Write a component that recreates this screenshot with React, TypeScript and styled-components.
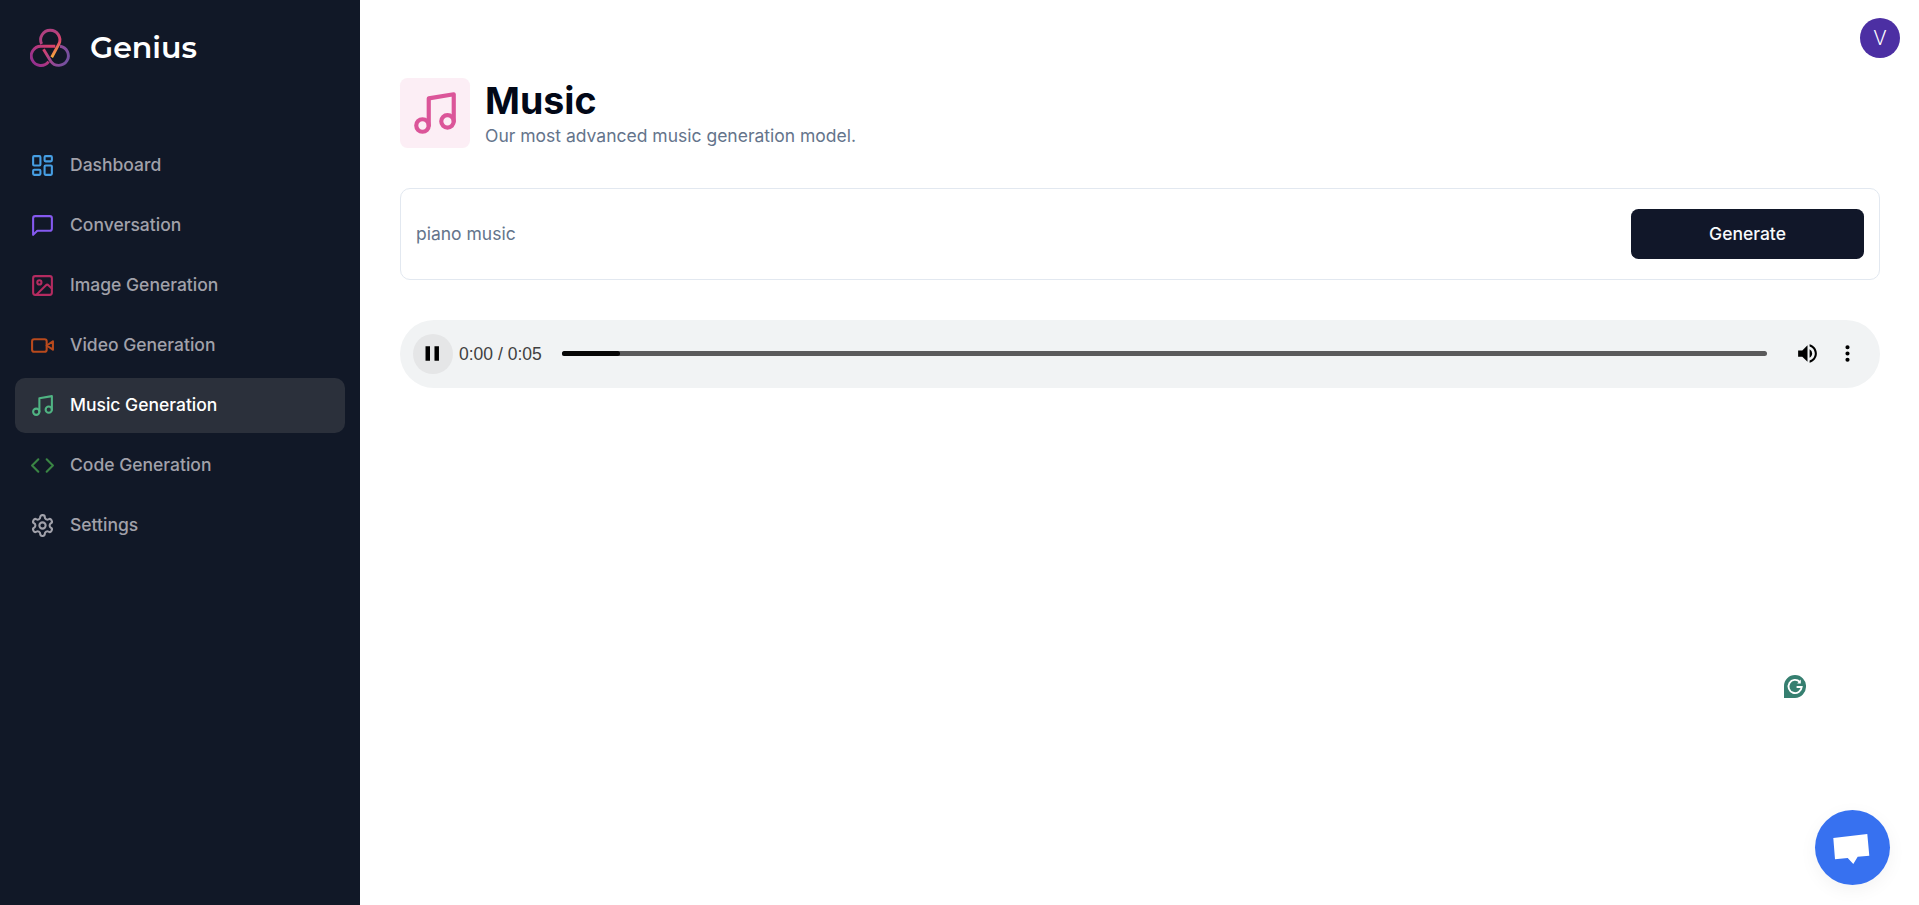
import React from "react";
import styled, { createGlobalStyle } from "styled-components";

const GlobalStyle = createGlobalStyle`
  *, *::before, *::after { box-sizing: border-box; }
  html { font-size: 20px; }
  body {
    margin: 0;
    background: #fff;
    color: #020817;
    font-family: Inter, "Liberation Sans", sans-serif;
    line-height: 1.5;
  }
  h1, h2, p { margin: 0; }
  button, input { font: inherit; }
`;

const Page = styled.div`
  display: flex;
  height: 100vh;
  overflow: hidden;
`;

const Sidebar = styled.aside`
  width: 18rem;
  flex: none;
  padding: 1rem 0.75rem;
  background: #111827;
  color: #fff;
`;

const Brand = styled.a`
  display: flex;
  align-items: center;
  gap: 1rem;
  height: 2rem;
  margin: 0.4rem 0 3.5rem;
  padding-left: 0.75rem;
`;

const BrandMark = styled.svg`
  width: 2rem;
  height: 2rem;
  fill: none;
  stroke-width: 2.9;
`;

const BrandName = styled.h1`
  font-family: Montserrat, Inter, sans-serif;
  font-size: 1.5rem;
  font-weight: 600;
  line-height: 2rem;
`;

const Nav = styled.nav`
  display: flex;
  flex-direction: column;
  gap: 0.25rem;
`;

const NavItem = styled.a<{ $active?: boolean }>`
  display: flex;
  align-items: center;
  gap: 0.75rem;
  height: 2.75rem;
  padding: 0.75rem;
  border-radius: 0.5rem;
  font-size: 0.875rem;
  font-weight: 500;
  color: ${(p) => (p.$active ? "#fff" : "#a1a1aa")};
  background: ${(p) => (p.$active ? "#2b303b" : "transparent")};
`;

const LineIcon = styled.svg<{ $size: string; $color: string }>`
  width: ${(p) => p.$size};
  height: ${(p) => p.$size};
  flex: none;
  fill: none;
  stroke: ${(p) => p.$color};
  stroke-width: 2;
  stroke-linecap: round;
  stroke-linejoin: round;
`;

const Main = styled.main`
  flex: 1;
  min-width: 0;
`;

const TopBar = styled.header`
  display: flex;
  justify-content: flex-end;
  height: 78px;
  padding: 18px 19px 0 0;
`;

const Avatar = styled.div`
  display: grid;
  place-items: center;
  width: 2rem;
  height: 2rem;
  border-radius: 50%;
  background: #4c2fa3;
  color: #fff;
  font-family: Roboto, sans-serif;
  font-size: 21px;
  font-weight: 300;
  line-height: 1;
`;

const Heading = styled.section`
  display: flex;
  align-items: center;
  gap: 0.75rem;
  margin-bottom: 2rem;
  padding: 0 2rem;
`;

const HeadingIcon = styled.div`
  display: flex;
  padding: 0.5rem;
  border-radius: 0.375rem;
  background: #fceef5;
`;

const Title = styled.h2`
  font-size: 1.875rem;
  font-weight: 700;
  line-height: 2.25rem;
`;

const Subtitle = styled.p`
  font-size: 0.875rem;
  line-height: 1.25rem;
  color: #64748b;
`;

const Content = styled.div`
  display: flex;
  flex-direction: column;
  gap: 2rem;
  padding: 0 39px 0 2rem;
`;

const PromptForm = styled.form`
  display: grid;
  grid-template-columns: repeat(12, minmax(0, 1fr));
  gap: 0.5rem;
  padding: 1rem 0.75rem;
  border: 1px solid #e2e8f0;
  border-radius: 0.5rem;
`;

const PromptInput = styled.input`
  grid-column: span 10;
  min-width: 0;
  padding: 0;
  border: 0;
  outline: 0;
  background: transparent;
  color: #64748b;
  font-size: 0.875rem;
`;

const GenerateButton = styled.button`
  grid-column: span 2;
  height: 2.5rem;
  border: 0;
  border-radius: 0.375rem;
  background: #111729;
  color: #f8fafc;
  font-size: 0.875rem;
  font-weight: 500;
`;

const Player = styled.div`
  display: flex;
  align-items: center;
  height: 67.5px;
  padding: 0 12.5px;
  border-radius: 34px;
  background: #f1f3f4;
`;

const PlayerButton = styled.div<{ $pressed?: boolean }>`
  display: grid;
  place-items: center;
  width: 40px;
  height: 40px;
  flex: none;
  border-radius: 50%;
  background: ${(p) => (p.$pressed ? "#e5e6e7" : "transparent")};
  svg { width: 25px; height: 25px; }
`;

const Time = styled.span`
  margin: 0 20px 0 6.5px;
  font-family: "Liberation Sans", Arial, sans-serif;
  font-size: 17.5px;
  color: #404040;
  white-space: nowrap;
`;

const Track = styled.div`
  flex: 1;
  height: 5px;
  margin-right: 21px;
  border-radius: 2.5px;
  background: #5a5a5b;
`;

const Played = styled.div`
  width: 4.8%;
  height: 100%;
  border-radius: inherit;
  background: #060606;
`;

const WritingBadge = styled.svg`
  position: fixed;
  left: 1784px;
  top: 675px;
  width: 22px;
  height: 23px;
`;

const ChatButton = styled.div`
  position: fixed;
  right: 29px;
  bottom: 20px;
  width: 75px;
  height: 75px;
  border-radius: 50%;
  background: #3771f0;
  box-shadow: 0 5px 18px rgba(0, 0, 0, 0.05);
  svg { display: block; width: 75px; height: 75px; }
`;

const paths = {
  dashboard: (
    <>
      <rect x="3" y="3" width="7" height="9" rx="1" />
      <rect x="14" y="3" width="7" height="5" rx="1" />
      <rect x="14" y="12" width="7" height="9" rx="1" />
      <rect x="3" y="16" width="7" height="5" rx="1" />
    </>
  ),
  message: <path d="M21 15a2 2 0 0 1-2 2H7l-4 4V5a2 2 0 0 1 2-2h14a2 2 0 0 1 2 2z" />,
  image: (
    <>
      <rect x="3" y="3" width="18" height="18" rx="2" />
      <circle cx="9" cy="9" r="2" />
      <path d="m21 15-3.086-3.086a2 2 0 0 0-2.828 0L6 21" />
    </>
  ),
  video: (
    <>
      <path d="m22 8-6 4 6 4V8Z" />
      <rect x="2" y="6" width="14" height="12" rx="2" />
    </>
  ),
  music: (
    <>
      <path d="M9 18V5l12-2v13" />
      <circle cx="6" cy="18" r="3" />
      <circle cx="18" cy="16" r="3" />
    </>
  ),
  code: (
    <>
      <path d="m16 18 6-6-6-6" />
      <path d="m8 6-6 6 6 6" />
    </>
  ),
  settings: (
    <>
      <path d="M12.22 2h-.44a2 2 0 0 0-2 2v.18a2 2 0 0 1-1 1.73l-.43.25a2 2 0 0 1-2 0l-.15-.08a2 2 0 0 0-2.73.73l-.22.38a2 2 0 0 0 .73 2.73l.15.1a2 2 0 0 1 1 1.72v.51a2 2 0 0 1-1 1.74l-.15.09a2 2 0 0 0-.73 2.73l.22.38a2 2 0 0 0 2.73.73l.15-.08a2 2 0 0 1 2 0l.43.25a2 2 0 0 1 1 1.73V20a2 2 0 0 0 2 2h.44a2 2 0 0 0 2-2v-.18a2 2 0 0 1 1-1.73l.43-.25a2 2 0 0 1 2 0l.15.08a2 2 0 0 0 2.73-.73l.22-.39a2 2 0 0 0-.73-2.73l-.15-.08a2 2 0 0 1-1-1.74v-.5a2 2 0 0 1 1-1.74l.15-.09a2 2 0 0 0 .73-2.73l-.22-.38a2 2 0 0 0-2.73-.73l-.15.08a2 2 0 0 1-2 0l-.43-.25a2 2 0 0 1-1-1.73V4a2 2 0 0 0-2-2z" />
      <circle cx="12" cy="12" r="3" />
    </>
  ),
};

type IconName = keyof typeof paths;

function Icon({ name, color, size = "1.25rem" }: { name: IconName; color: string; size?: string }) {
  return (
    <LineIcon viewBox="0 0 24 24" $size={size} $color={color}>
      {paths[name]}
    </LineIcon>
  );
}

const routes: { label: string; icon: IconName; color: string; active?: boolean }[] = [
  { label: "Dashboard", icon: "dashboard", color: "#469ee3" },
  { label: "Conversation", icon: "message", color: "#8559f0" },
  { label: "Image Generation", icon: "image", color: "#b42b60" },
  { label: "Video Generation", icon: "video", color: "#b94a1d" },
  { label: "Music Generation", icon: "music", color: "#50b483", active: true },
  { label: "Code Generation", icon: "code", color: "#3a8544" },
  { label: "Settings", icon: "settings", color: "#a1a1aa" },
];

function Logo() {
  return (
    <BrandMark viewBox="0 0 40 40">
      <defs>
        <linearGradient id="top" gradientUnits="userSpaceOnUse" x1="11" y1="14" x2="23" y2="30">
          <stop offset="0" stopColor="#b0407f" />
          <stop offset="0.5" stopColor="#dc436c" />
          <stop offset="1" stopColor="#f9b536" />
        </linearGradient>
        <linearGradient id="left" gradientUnits="userSpaceOnUse" x1="4" y1="34" x2="25" y2="18">
          <stop offset="0" stopColor="#96308e" />
          <stop offset="1" stopColor="#de4267" />
        </linearGradient>
        <linearGradient id="right" gradientUnits="userSpaceOnUse" x1="13" y1="21" x2="38" y2="30">
          <stop offset="0" stopColor="#d8406d" />
          <stop offset="0.5" stopColor="#984793" />
          <stop offset="1" stopColor="#73509f" />
        </linearGradient>
      </defs>
      <path stroke="url(#left)" d="M25.3 18.3H11A9.6 9.6 0 1 0 18.6 33.6" />
      <path stroke="url(#right)" d="M13.5 21.2 20.8 33.2A9.6 9.6 0 1 0 30 18.3" />
      <path stroke="url(#top)" d="M11.6 16A9.6 9.6 0 1 1 29 15.8L21.7 29.3" />
    </BrandMark>
  );
}

export default function App() {
  return (
    <>
      <GlobalStyle />
      <Page>
        <Sidebar>
          <Brand>
            <Logo />
            <BrandName>Genius</BrandName>
          </Brand>
          <Nav>
            {routes.map((r) => (
              <NavItem key={r.label} $active={r.active}>
                <Icon name={r.icon} color={r.color} />
                {r.label}
              </NavItem>
            ))}
          </Nav>
        </Sidebar>
        <Main>
          <TopBar>
            <Avatar>V</Avatar>
          </TopBar>
          <Heading>
            <HeadingIcon>
              <Icon name="music" color="#db5599" size="2.5rem" />
            </HeadingIcon>
            <div>
              <Title>Music</Title>
              <Subtitle>Our most advanced music generation model.</Subtitle>
            </div>
          </Heading>
          <Content>
            <PromptForm>
              <PromptInput defaultValue="piano music" />
              <GenerateButton type="button">Generate</GenerateButton>
            </PromptForm>
            <Player>
              <PlayerButton $pressed>
                <svg viewBox="0 0 24 24">
                  <path d="M5.3 5h4.3v14H5.3zM13.9 5h4.3v14h-4.3z" />
                </svg>
              </PlayerButton>
              <Time>0:00 / 0:05</Time>
              <Track>
                <Played />
              </Track>
              <PlayerButton>
                <svg viewBox="0 0 24 24">
                  <path d="M3 9v6h4l5 5V4L7 9H3zm13.5 3A4.5 4.5 0 0 0 14 7.97v8.05c1.48-.73 2.5-2.25 2.5-4.02zM14 3.23v2.06c2.89.86 5 3.54 5 6.71s-2.11 5.85-5 6.71v2.06c4.01-.91 7-4.49 7-8.77s-2.99-7.86-7-8.77z" />
                </svg>
              </PlayerButton>
              <PlayerButton>
                <svg viewBox="0 0 24 24">
                  <path d="M12 8a2 2 0 1 0 0-4 2 2 0 0 0 0 4zm0 2a2 2 0 1 0 0 4 2 2 0 0 0 0-4zm0 6a2 2 0 1 0 0 4 2 2 0 0 0 0-4z" />
                </svg>
              </PlayerButton>
            </Player>
          </Content>
        </Main>
      </Page>
      <WritingBadge viewBox="0 0 22 23">
        <path fill="#367f70" d="M11 0a11 11 0 0 1 11 11.5A11.3 11.3 0 0 1 11 23H0V11A11 11 0 0 1 11 0z" />
        <path fill="none" stroke="#fff" strokeWidth="1.9" d="M15.8 6.8A6.6 6.6 0 1 0 17.7 12H12.6" />
        <path fill="#fff" d="M16.8 4.6v4h-3.6z" />
      </WritingBadge>
      <ChatButton>
        <svg viewBox="0 0 75 75">
          <path fill="#fff" d="M18.3 28 52.3 24 54.3 45.7 42.7 46.8 38.3 54 32.7 48 20 49.3z" />
        </svg>
      </ChatButton>
    </>
  );
}
